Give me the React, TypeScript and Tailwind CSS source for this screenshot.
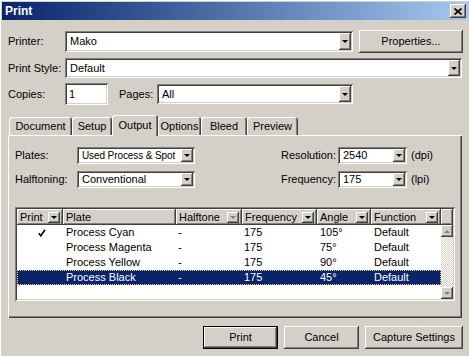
import React from 'react';

// classic 3D edges
const raised =
  'shadow-[inset_-1px_-1px_0_#404040,inset_1px_1px_0_#ffffff,inset_-2px_-2px_0_#808080]';
const sunken =
  'shadow-[inset_1px_1px_0_#808080,inset_-1px_-1px_0_#ffffff,inset_2px_2px_0_#404040,inset_-2px_-2px_0_#d4d0c8]';

const DownArrow = ({ disabled }: { disabled?: boolean }) => (
  <span
    className={`block w-0 h-0 border-l-[3px] border-r-[3px] border-t-[3px] border-l-transparent border-r-transparent ${
      disabled ? 'border-t-[#808080]' : 'border-t-black'
    }`}
  />
);

const UpArrow = () => (
  <span className="block w-0 h-0 border-l-[3px] border-r-[3px] border-b-[3px] border-l-transparent border-r-transparent border-b-[#808080]" />
);

const DropButton = ({ className = '', disabled }: { className?: string; disabled?: boolean }) => (
  <div className={`flex items-center justify-center bg-[#d4d0c8] ${raised} ${className}`}>
    <DownArrow disabled={disabled} />
  </div>
);

interface ComboProps {
  value: string;
  className?: string;
  textClass?: string;
}

const Combo: React.FC<ComboProps> = ({ value, className = '', textClass = '' }) => (
  <div className={`flex items-stretch bg-white p-[2px] ${sunken} ${className}`}>
    <span className={`flex-1 flex items-center pl-[3px] whitespace-nowrap overflow-hidden ${textClass}`}>{value}</span>
    <DropButton className="w-[12px]" />
  </div>
);

const PushButton = ({
  label,
  className = '',
  isDefault,
}: {
  label: string;
  className?: string;
  isDefault?: boolean;
}) =>
  isDefault ? (
    <div className={`border border-black ${className}`}>
      <div className={`w-full h-full flex items-center justify-center bg-[#d4d0c8] ${raised}`}>{label}</div>
    </div>
  ) : (
    <div className={`flex items-center justify-center bg-[#d4d0c8] ${raised} ${className}`}>{label}</div>
  );

const tabs = [
  { label: 'Document', w: 'w-[63px]' },
  { label: 'Setup', w: 'w-[40px]' },
  { label: 'Output', w: 'w-[46px]', selected: true },
  { label: 'Options', w: 'w-[43px]' },
  { label: 'Bleed', w: 'w-[46px]' },
  { label: 'Preview', w: 'w-[51px]' },
];

const columns = [
  { label: 'Print', w: 'w-[46px]', drop: true },
  { label: 'Plate', w: 'w-[113px]' },
  { label: 'Halftone', w: 'w-[66px]', drop: true, disabled: true },
  { label: 'Frequency', w: 'w-[75px]', drop: true },
  { label: 'Angle', w: 'w-[54px]', drop: true },
  { label: 'Function', w: 'w-[70px]', drop: true },
];

const plates = [
  { name: 'Process Cyan', print: true, angle: '105°' },
  { name: 'Process Magenta', print: false, angle: '75°' },
  { name: 'Process Yellow', print: false, angle: '90°' },
  { name: 'Process Black', print: false, angle: '45°', selected: true },
];

const Check = () => (
  <svg width="8" height="8" viewBox="0 0 8 8" className="block">
    <path d="M0.8 4.2 L2.8 6.8 L7 0.8" fill="none" stroke="currentColor" strokeWidth="1.6" />
  </svg>
);

export default function App() {
  return (
    <div className="w-[469px] h-[356px] overflow-hidden bg-[#d4d0c8] border-t border-l border-white font-['Liberation_Sans',Arial,sans-serif] text-[11px] text-black leading-none">
      <div className="pt-[1px] pl-[1px]">
        {/* Title bar */}
        <div className="h-[18px] flex items-center justify-between pl-[3px] pr-[3px] bg-linear-to-r from-[#0a246a] to-[#a6caf0]">
          <span className="text-white font-bold text-[12px]">Print</span>
          <div className={`w-[16px] h-[14px] flex items-center justify-center bg-[#d4d0c8] ${raised}`}>
            <svg width="8" height="7" viewBox="0 0 8 7">
              <path d="M0.5 0.5 L7.5 6.5 M7.5 0.5 L0.5 6.5" stroke="black" strokeWidth="1.6" />
            </svg>
          </div>
        </div>

        <div className="pl-[6px]">
          {/* Printer */}
          <div className="mt-[10px] h-[23px] flex items-center">
            <span className="w-[57px]">Printer:</span>
            <Combo value="Mako" className="w-[288px] h-[21px]" />
            <PushButton label="Properties..." className="ml-[6px] w-[104px] h-[23px]" />
          </div>

          {/* Print Style */}
          <div className="mt-[5px] h-[20px] flex items-center">
            <span className="w-[57px]">Print Style:</span>
            <Combo value="Default" className="w-[397px] h-[20px]" />
          </div>

          {/* Copies / Pages */}
          <div className="mt-[5px] h-[22px] flex items-center">
            <span className="w-[57px]">Copies:</span>
            <div className={`w-[43px] h-[22px] bg-white flex items-center pl-[4px] ${sunken}`}>1</div>
            <span className="ml-[11px] w-[38px]">Pages:</span>
            <Combo value="All" className="w-[196px] h-[20px]" />
          </div>

          {/* Tabs */}
          <div className="mt-[10px] ml-[1px] flex items-end">
            {tabs.map((t) => (
              <div
                key={t.label}
                className={`${t.w} flex justify-center rounded-t-[3px] bg-[#d4d0c8] shadow-[inset_1px_1px_0_#ffffff,inset_-1px_0_0_#404040,inset_-2px_0_0_#808080] ${
                  t.selected ? 'relative z-10 h-[21px] mb-[-1px] pt-[5px]' : 'h-[18px] pt-[4px]'
                }`}
              >
                {t.label}
              </div>
            ))}
          </div>

          {/* Output panel */}
          <div className="w-[454px] h-[183px] pt-[12px] pl-[7px] shadow-[inset_1px_1px_0_#ffffff,inset_-1px_-1px_0_#404040,inset_-2px_-2px_0_#808080]">
            <div className="h-[17px] flex items-center">
              <span className="w-[62px]">Plates:</span>
              <Combo
                value="Used Process & Spot"
                className="w-[118px] h-[17px]"
                textClass="pl-[2px] text-[10px] tracking-[-0.1px]"
              />
              <span className="w-[141px] text-right">Resolution:</span>
              <Combo value="2540" className="ml-[2px] w-[69px] h-[17px]" />
              <span className="ml-[4px]">(dpi)</span>
            </div>
            <div className="mt-[7px] h-[17px] flex items-center">
              <span className="w-[62px]">Halftoning:</span>
              <Combo value="Conventional" className="w-[118px] h-[17px]" />
              <span className="w-[141px] text-right">Frequency:</span>
              <Combo value="175" className="ml-[2px] w-[69px] h-[17px]" />
              <span className="ml-[4px]">(lpi)</span>
            </div>

            {/* Plate list */}
            <div className={`mt-[19px] w-[440px] h-[94px] p-[2px] bg-white flex flex-col ${sunken}`}>
              <div className="h-[16px] flex shrink-0">
                {columns.map((c) => (
                  <div key={c.label} className={`${c.w} flex items-center pl-[3px] pr-[3px] bg-[#d4d0c8] ${raised}`}>
                    <span className="flex-1">{c.label}</span>
                    {c.drop && <DropButton className="w-[12px] h-[11px]" disabled={c.disabled} />}
                  </div>
                ))}
                <div className={`w-[12px] bg-[#d4d0c8] ${raised}`} />
              </div>
              <div className="flex flex-1">
                <div className="w-[424px] flex flex-col">
                  {plates.map((p) => (
                    <div
                      key={p.name}
                      className={`h-[15px] flex items-center ${
                        p.selected
                          ? 'bg-[#0a246a] text-white outline-1 outline-dotted outline-[#e8cf7a] -outline-offset-1'
                          : ''
                      }`}
                    >
                      <div className="w-[46px] flex justify-center pl-[4px]">{p.print && <Check />}</div>
                      <div className="w-[113px] pl-[3px]">{p.name}</div>
                      <div className="w-[66px] pl-[2px]">-</div>
                      <div className="w-[75px] pl-[2px]">175</div>
                      <div className="w-[54px] pl-[3px]">{p.angle}</div>
                      <div className="w-[70px] pl-[3px]">Default</div>
                    </div>
                  ))}
                </div>
                <div className="w-[12px] flex flex-col">
                  <div className={`h-[12px] flex items-center justify-center bg-[#d4d0c8] ${raised}`}>
                    <UpArrow />
                  </div>
                  <div className="flex-1 bg-[image:repeating-conic-gradient(#d4d0c8_0_25%,#ffffff_0_50%)] bg-[length:2px_2px]" />
                  <div className={`h-[12px] flex items-center justify-center bg-[#d4d0c8] ${raised}`}>
                    <DownArrow disabled />
                  </div>
                </div>
              </div>
            </div>
          </div>

          {/* Buttons */}
          <div className="mt-[8px] w-[455px] flex justify-end gap-[6px]">
            <PushButton label="Print" isDefault className="w-[75px] h-[23px]" />
            <PushButton label="Cancel" className="w-[75px] h-[23px]" />
            <PushButton label="Capture Settings" className="w-[98px] h-[23px]" />
          </div>
        </div>
      </div>
    </div>
  );
}
